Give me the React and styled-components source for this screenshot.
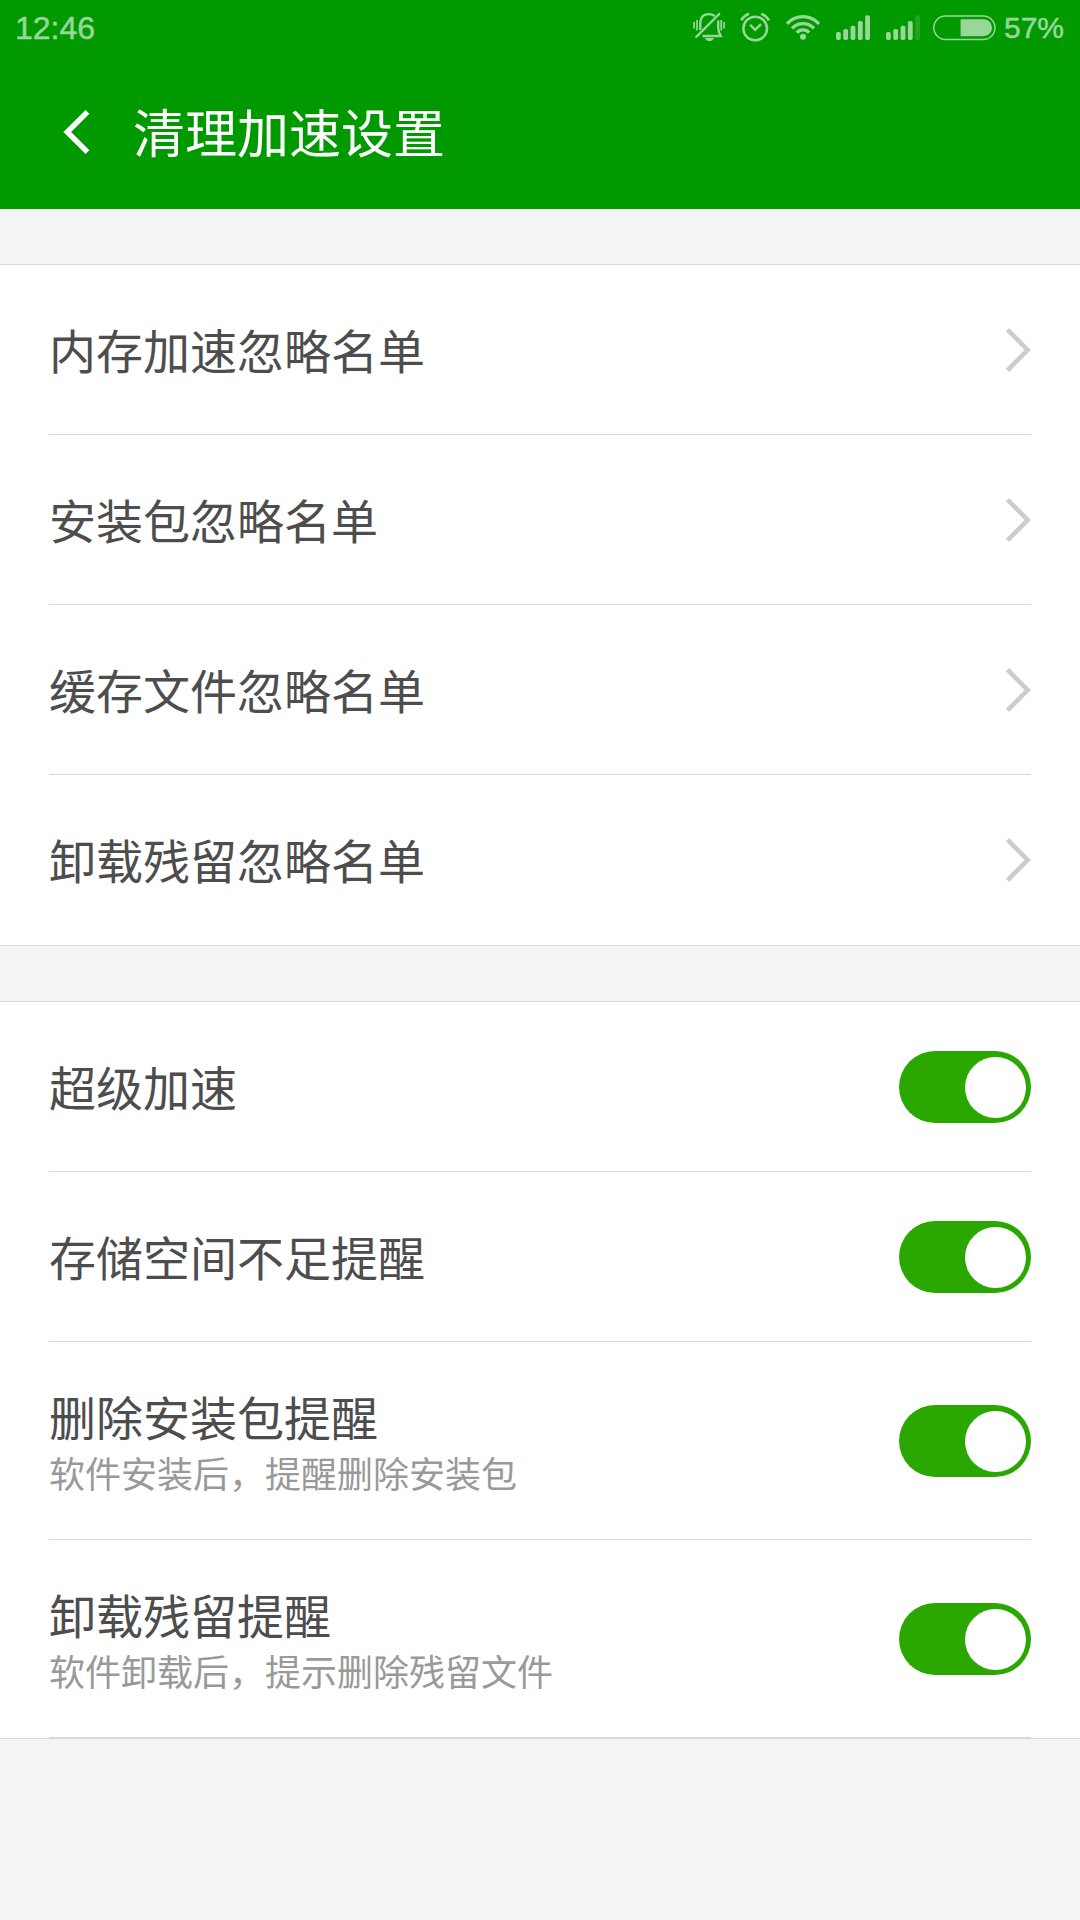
import React, { useState } from "react";
import styled, { createGlobalStyle } from "styled-components";

const GlobalStyle = createGlobalStyle`
  * {
    box-sizing: border-box;
  }

  body {
    margin: 0;
    background: #f4f4f4;
    font-family: "Liberation Sans", "Noto Sans CJK SC", sans-serif;
  }
`;

const Page = styled.div`
  width: 1080px;
  height: 1920px;
  overflow: hidden;
  background: #f4f4f4;
`;

const Header = styled.header`
  height: 209px;
  background: #009900;
`;

const StatusBar = styled.div`
  display: flex;
  align-items: center;
  justify-content: space-between;
  height: 56px;
  padding: 0 16px 0 15px;
  color: #99d699;
  -webkit-text-stroke: 0.5px #99d699;
`;

const Clock = styled.span`
  font-size: 32px;
  line-height: 56px;
`;

const StatusIcons = styled.div`
  display: flex;
  align-items: center;

  svg {
    display: block;
  }
`;

const Percent = styled.span`
  margin-left: 8px;
  font-size: 30px;
  line-height: 56px;
`;

const TitleBar = styled.div`
  display: flex;
  align-items: center;
  height: 152px;
  padding-left: 60px;
`;

const BackButton = styled.button`
  display: flex;
  width: 73px;
  padding: 0;
  border: 0;
  background: none;
`;

const Title = styled.h1`
  margin: 0;
  padding-bottom: 3px;
  color: #fff;
  font-family: "Noto Sans CJK SC", sans-serif;
  font-size: 52px;
  font-weight: 400;
  line-height: 76px;
`;

const Group = styled.section`
  margin-top: 55px;
  padding: 0 49px;
  border-top: 1px solid #d9d9d9;
  border-bottom: 1px solid #d9d9d9;
  background: #fff;
`;

const Row = styled.div`
  display: flex;
  align-items: center;
  justify-content: space-between;
  height: ${(props) => (props.$tall ? 198 : 170)}px;
  padding-top: 1px;
  border-bottom: 1px solid ${(props) => (props.$plain ? "transparent" : "#d9d9d9")};
`;

const RowText = styled.div`
  padding: ${(props) => (props.$single ? "0 0 2px" : "1px 0 0")};
  font-family: "Noto Sans CJK SC", sans-serif;
`;

const Label = styled.div`
  color: #4d4d4d;
  font-size: 47px;
  line-height: 60px;
`;

const Hint = styled.div`
  margin-top: 1px;
  color: #999;
  font-size: 36px;
  line-height: 50px;
`;

const Switch = styled.button`
  display: flex;
  align-items: center;
  justify-content: ${(props) => (props.$on ? "flex-end" : "flex-start")};
  width: 132px;
  height: 72px;
  padding: 0 5px;
  border: 0;
  border-radius: 36px;
  background: ${(props) => (props.$on ? "#2aa700" : "#ccc")};
`;

const Knob = styled.span`
  width: 61px;
  height: 61px;
  border-radius: 50%;
  background: #fff;
`;

const MuteIcon = () => (
  <svg width="200" height="56" viewBox="0 0 200 56" fill="none" stroke="currentColor">
    {/* bell */}
    <g strokeWidth="2.3">
      <path d="M20.3 30V22.5Q20.8 14.2 29 14.2Q32.5 14.2 34.8 16.2" />
      <path d="M38.2 20.5V28.5Q38.6 32 40.8 36H22.5" />
      <path d="M16.3 36.8L39.2 14" strokeWidth="2.4" strokeLinecap="round" />
      <path d="M14.1 22V28.5M17 20V30.5M41.2 20V30.5M44 22V28.5" strokeWidth="1.7" />
    </g>
    <path d="M25 38H34Q32.5 41.2 29.5 41.2T25 38Z" fill="currentColor" stroke="none" />
    {/* alarm */}
    <circle cx="75.2" cy="28.5" r="11.8" strokeWidth="2.5" />
    <path d="M70.2 24.8L75.2 29.8L81 24.2" strokeWidth="2.5" />
    <path d="M61.3 20.4Q63.5 16 69 13.8M89 20.4Q86.8 16 81.3 13.8" strokeWidth="2.7" />
    {/* wifi */}
    <g strokeWidth="3.3">
      <path d="M107 23.8Q113.5 16.6 123 16.6T139 23.8" />
      <path d="M112 28.4Q116.5 23.6 123 23.6T134 28.4" />
      <path d="M116.8 32.6Q119.4 29.8 123 29.8T129.2 32.6" />
    </g>
    <circle cx="123" cy="36.8" r="3" fill="currentColor" stroke="none" />
  </svg>
);

const SignalIcon = ({ weak }) => (
  <svg width="34" height="26" viewBox="0 0 34 26" fill="currentColor">
    <rect x="0" y="17" width="4.8" height="8" rx="1.8" />
    <rect x="7.3" y="14" width="4.8" height="11" rx="1.8" />
    <rect x="14.6" y="10.7" width="4.8" height="14.3" rx="1.8" />
    <rect x="21.9" y="6" width="4.8" height="19" rx="1.8" />
    <rect x="29.2" y="0.3" width="4.8" height="24.7" rx="1.8" opacity={weak ? 0.22 : 1} />
  </svg>
);

const SignalPair = styled.div`
  display: flex;
  gap: 16px;
  margin: 0 13px 0 -44px;
`;

const BatteryIcon = () => (
  <svg width="63" height="26" viewBox="0 0 63 26">
    <rect x="0.8" y="1.1" width="61.2" height="23.3" rx="11.6" fill="none" stroke="currentColor" strokeWidth="1.5" />
    <path d="M27.6 4.2H50.5A8.5 8.5 0 0 1 50.5 21.2H27.6Z" fill="currentColor" />
  </svg>
);

const BackIcon = () => (
  <svg width="32" height="48" viewBox="0 0 32 48" fill="none" stroke="#fff" strokeWidth="5.4">
    <path d="M27.5 3.8L7.2 24L27.5 44.2" />
  </svg>
);

const ArrowIcon = () => (
  <svg width="26" height="46" viewBox="0 0 26 46" fill="none" stroke="#ccc" strokeWidth="4.6">
    <path d="M2.5 2.6L22.7 23L2.5 43.4" />
  </svg>
);

const ignoreLists = [
  "内存加速忽略名单",
  "安装包忽略名单",
  "缓存文件忽略名单",
  "卸载残留忽略名单",
];

const options = [
  { label: "超级加速" },
  { label: "存储空间不足提醒" },
  { label: "删除安装包提醒", hint: "软件安装后，提醒删除安装包" },
  { label: "卸载残留提醒", hint: "软件卸载后，提示删除残留文件" },
];

const OptionRow = ({ label, hint }) => {
  const [on, setOn] = useState(true);

  return (
    <Row $tall={Boolean(hint)}>
      <RowText $single={!hint}>
        <Label>{label}</Label>
        {hint && <Hint>{hint}</Hint>}
      </RowText>
      <Switch $on={on} role="switch" aria-checked={on} onClick={() => setOn(!on)}>
        <Knob />
      </Switch>
    </Row>
  );
};

const App = () => {
  return (
    <Page>
      <GlobalStyle />
      <Header>
        <StatusBar>
          <Clock>12:46</Clock>
          <StatusIcons>
            <MuteIcon />
            <SignalPair>
              <SignalIcon />
              <SignalIcon weak />
            </SignalPair>
            <BatteryIcon />
            <Percent>57%</Percent>
          </StatusIcons>
        </StatusBar>
        <TitleBar>
          <BackButton>
            <BackIcon />
          </BackButton>
          <Title>清理加速设置</Title>
        </TitleBar>
      </Header>

      <Group>
        {ignoreLists.map((label, index) => (
          <Row key={label} $plain={index === ignoreLists.length - 1}>
            <RowText $single>
              <Label>{label}</Label>
            </RowText>
            <ArrowIcon />
          </Row>
        ))}
      </Group>

      <Group>
        {options.map((item) => (
          <OptionRow key={item.label} {...item} />
        ))}
      </Group>
    </Page>
  );
};

export default App;
